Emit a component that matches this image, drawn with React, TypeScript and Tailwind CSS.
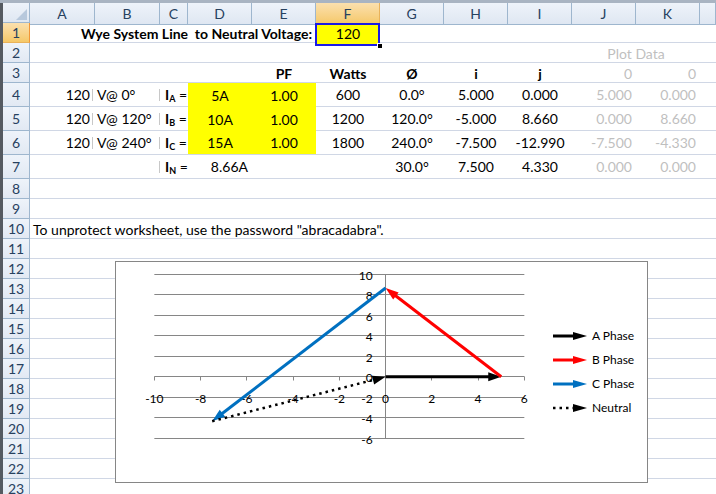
import React from 'react';

const DATA =
  'grid grid-cols-[65px_65px_28px_64px_64px_64px_64px_64px_64px_64px_64px_1fr] flex-1 border-b border-[#d0d7e5]';

// L is only partly on screen, its letter falls outside the window
const LETTERS = ['A', 'B', 'C', 'D', 'E', 'F', 'G', 'H', 'I', 'J', 'K', ''];

function RowHead({ n, active }: { n: number; active?: boolean }) {
  return (
    <div
      className={
        active
          ? 'w-[27px] shrink-0 flex items-center justify-center bg-linear-to-b from-[#fbe0ae] to-[#f5c867] border-r border-b border-r-[#f29536] border-b-[#e9b25a] text-[#27415f]'
          : 'w-[27px] shrink-0 flex items-center justify-center bg-linear-to-b from-[#eef3fa] to-[#e2e9f3] border-r border-b border-[#9eb6ce] text-[#27415f]'
      }
    >
      {n}
    </div>
  );
}

function Row({
  n,
  h = 'h-[20px]',
  active,
  children,
}: {
  n: number;
  h?: string;
  active?: boolean;
  children?: React.ReactNode;
}) {
  return (
    <div className={`flex ${h}`}>
      <RowHead n={n} active={active} />
      <div className={DATA}>{children}</div>
    </div>
  );
}

// little grey tick that sits between A|B and B|C
const Sep = () => <span className="w-px h-[12px] bg-[#c8c8c8] shrink-0" />;

function Cur({ s }: { s: string }) {
  return (
    <div className="col-start-3 flex items-center pl-[5px]">
      <span className="font-bold">
        I<sub className="text-[9px]">{s}</sub>
      </span>
      <span>&nbsp;=</span>
    </div>
  );
}

// ---------- chart ----------
const X = (v: number) => 269.6 + 23.125 * v;
const Y = (v: number) => 114.8 - 10.25 * v;
const px = (n: number) => Math.floor(n) + 0.5;

function Arrow({
  x1,
  y1,
  x2,
  y2,
  color,
  dotted,
}: {
  x1: number;
  y1: number;
  x2: number;
  y2: number;
  color: string;
  dotted?: boolean;
}) {
  const dx = x2 - x1;
  const dy = y2 - y1;
  const len = Math.hypot(dx, dy);
  const ux = dx / len;
  const uy = dy / len;
  const L = 13;
  const W = 4.5;
  const bx = x2 - ux * L;
  const by = y2 - uy * L;
  const pts = `${x2},${y2} ${bx - uy * W},${by + ux * W} ${bx + uy * W},${by - ux * W}`;
  return (
    <g>
      <line
        x1={x1}
        y1={y1}
        x2={bx + ux * 2}
        y2={by + uy * 2}
        stroke={color}
        strokeWidth={dotted ? 2.5 : 3}
        strokeDasharray={dotted ? '2.5 4' : undefined}
      />
      <polygon points={pts} fill={color} />
    </g>
  );
}

const legend = [
  { label: 'A Phase', color: '#000000', dotted: false },
  { label: 'B Phase', color: '#ff0000', dotted: false },
  { label: 'C Phase', color: '#0070c0', dotted: false },
  { label: 'Neutral', color: '#000000', dotted: true },
];

function Chart() {
  const grid = [10, 8, 6, 4, 2, -2, -4, -6];
  const xs = [-10, -8, -6, -4, -2, 0, 2, 4, 6];
  const ys = [10, 8, 6, 4, 2, 0, -2, -4, -6];
  return (
    <div className="absolute left-[115px] top-[261px] w-[533px] h-[222px] border border-[#868686] bg-white">
      <svg className="absolute inset-0" width="531" height="220" fontFamily="Lato, sans-serif" fontSize="12">
        {grid.map((g) => (
          <line key={g} x1={X(-10)} x2={X(6)} y1={px(Y(g))} y2={px(Y(g))} stroke="#868686" strokeWidth={1} />
        ))}
        <line x1={X(-10)} x2={X(6)} y1={px(Y(0))} y2={px(Y(0))} stroke="#868686" strokeWidth={1} />
        <line x1={px(X(0))} x2={px(X(0))} y1={px(Y(10))} y2={px(Y(-6))} stroke="#868686" strokeWidth={1} />
        {xs.map((v) => (
          <line key={v} x1={px(X(v))} x2={px(X(v))} y1={px(Y(0))} y2={px(Y(0)) + 4} stroke="#868686" strokeWidth={1} />
        ))}
        {ys.map((v) => (
          <text key={v} x={X(0) - 13} y={Y(v) + 1} textAnchor="end" dominantBaseline="central" fill="#000">
            {v}
          </text>
        ))}
        {xs.map((v) => (
          <text key={v} x={X(v)} y={Y(-2) + 1} textAnchor="middle" dominantBaseline="central" fill="#000">
            {v}
          </text>
        ))}
        <Arrow x1={X(0)} y1={Y(0)} x2={X(5)} y2={Y(0)} color="#000000" />
        <Arrow x1={X(5)} y1={Y(0)} x2={X(0)} y2={Y(8.66)} color="#ff0000" />
        <Arrow x1={X(0)} y1={Y(8.66)} x2={X(-7.5)} y2={Y(-4.33)} color="#0070c0" />
        <Arrow x1={X(-7.5)} y1={Y(-4.33)} x2={X(0)} y2={Y(0)} color="#000000" dotted />
      </svg>

      <div className="absolute left-[437px] top-[62px] flex flex-col text-[12px]">
        {legend.map((it) => (
          <div key={it.label} className="flex items-center h-[24px] gap-[5px]">
            <svg width="34" height="10">
              <line
                x1="0"
                y1="5"
                x2="22"
                y2="5"
                stroke={it.color}
                strokeWidth={it.dotted ? 2.5 : 3}
                strokeDasharray={it.dotted ? '2.5 4' : undefined}
              />
              <polygon points="34,5 20,1 20,9" fill={it.color} />
            </svg>
            <span>{it.label}</span>
          </div>
        ))}
      </div>
    </div>
  );
}

export default function App() {
  return (
    <div className="relative w-[716px] h-[494px] overflow-hidden bg-white font-['Lato',sans-serif] text-[14px] text-black">
      <div className="h-[3px] bg-[#a9b4c2]" />
      <div className="flex">
        <div className="w-[3px] shrink-0 bg-[#555a61]" />
        <div className="flex-1">
          {/* column headers */}
          <div className="flex h-[20px]">
            <div className="w-[27px] shrink-0 relative bg-linear-to-b from-[#eef3fa] to-[#dfe7f2] border-r border-b border-[#9eb6ce]">
              <svg className="absolute right-[2px] bottom-[2px]" width="11" height="11">
                <polygon points="11,0 11,11 0,11" fill="#b7c8dc" />
              </svg>
            </div>
            <div className="grid grid-cols-[65px_65px_28px_64px_64px_64px_64px_64px_64px_64px_64px_1fr] flex-1">
              {LETTERS.map((l, i) => (
                <div
                  key={i}
                  className={
                    l === 'F'
                      ? 'flex items-center justify-center bg-linear-to-b from-[#fbe0ae] to-[#f5c867] border-r border-b border-r-[#e9b25a] border-b-[#f29536] text-[#27415f]'
                      : 'flex items-center justify-center bg-linear-to-b from-[#eef3fa] to-[#dfe7f2] border-r border-b border-[#9eb6ce] text-[#27415f]'
                  }
                >
                  {l}
                </div>
              ))}
            </div>
          </div>

          <Row n={1} active>
            <div className="col-start-1 col-span-5 flex items-center justify-end pr-[4px] font-bold whitespace-pre">
              Wye System Line  to Neutral Voltage:
            </div>
            <div className="col-start-6 relative bg-[#ffff00] flex items-center justify-center">
              120
              <div className="absolute -left-px right-0 top-0 -bottom-[2px] border-2 border-[#1a1ae6]" />
              <div className="absolute -right-[3px] -bottom-[5px] w-[6px] h-[6px] bg-black border border-white" />
            </div>
          </Row>

          <Row n={2}>
            <div className="col-start-10 col-span-2 flex items-center justify-center text-[#bfbfbf]">Plot Data</div>
          </Row>

          <Row n={3}>
            <div className="col-start-5 flex items-center justify-center font-bold">PF</div>
            <div className="col-start-6 flex items-center justify-center font-bold">Watts</div>
            <div className="col-start-7 flex items-center justify-center font-bold">Ø</div>
            <div className="col-start-8 flex items-center justify-center font-bold">i</div>
            <div className="col-start-9 flex items-center justify-center font-bold">j</div>
            <div className="col-start-10 flex items-center justify-end pr-[4px] text-[#bfbfbf]">0</div>
            <div className="col-start-11 flex items-center justify-end pr-[4px] text-[#bfbfbf]">0</div>
          </Row>

          {[
            { v: '0°', s: 'A', a: '5A', w: '600', ang: '0.0°', i: '5.000', j: '0.000', pi: '5.000', pj: '0.000' },
            { v: '120°', s: 'B', a: '10A', w: '1200', ang: '120.0°', i: '-5.000', j: '8.660', pi: '0.000', pj: '8.660' },
            { v: '240°', s: 'C', a: '15A', w: '1800', ang: '240.0°', i: '-7.500', j: '-12.990', pi: '-7.500', pj: '-4.330' },
          ].map((r, k) => (
            <Row key={r.s} n={4 + k} h="h-[24px]">
              <div className="col-start-1 flex items-center justify-end pr-[2px] gap-[2px]">
                120
                <Sep />
              </div>
              <div className="col-start-2 flex items-center justify-between pl-[2px] whitespace-nowrap">
                V@ {r.v}
                <Sep />
              </div>
              <Cur s={r.s} />
              <div
                className={
                  k < 2
                    ? 'col-start-4 col-span-2 grid grid-cols-2 bg-[#ffff00] relative -mb-px'
                    : 'col-start-4 col-span-2 grid grid-cols-2 bg-[#ffff00]'
                }
              >
                <div className="flex items-center justify-center">{r.a}</div>
                <div className="flex items-center justify-center">1.00</div>
              </div>
              <div className="col-start-6 flex items-center justify-center">{r.w}</div>
              <div className="col-start-7 flex items-center justify-center">{r.ang}</div>
              <div className="col-start-8 flex items-center justify-center">{r.i}</div>
              <div className="col-start-9 flex items-center justify-center">{r.j}</div>
              <div className="col-start-10 flex items-center justify-end pr-[4px] text-[#bfbfbf]">{r.pi}</div>
              <div className="col-start-11 flex items-center justify-end pr-[4px] text-[#bfbfbf]">{r.pj}</div>
            </Row>
          ))}

          <Row n={7} h="h-[24px]">
            <div className="col-start-2 flex items-center justify-end">
              <Sep />
            </div>
            <Cur s="N" />
            <div className="col-start-4 flex items-center justify-end pr-[4px]">8.66A</div>
            <div className="col-start-7 flex items-center justify-center">30.0°</div>
            <div className="col-start-8 flex items-center justify-center">7.500</div>
            <div className="col-start-9 flex items-center justify-center">4.330</div>
            <div className="col-start-10 flex items-center justify-end pr-[4px] text-[#bfbfbf]">0.000</div>
            <div className="col-start-11 flex items-center justify-end pr-[4px] text-[#bfbfbf]">0.000</div>
          </Row>

          <Row n={8} />
          <Row n={9} />
          <Row n={10}>
            <div className="col-start-1 col-span-12 flex items-center pl-[3px] whitespace-nowrap">
              To unprotect worksheet, use the password "abracadabra".
            </div>
          </Row>
          {[11, 12, 13, 14, 15, 16, 17, 18, 19, 20, 21, 22, 23].map((n) => (
            <Row key={n} n={n} />
          ))}
        </div>
      </div>

      <Chart />
    </div>
  );
}
